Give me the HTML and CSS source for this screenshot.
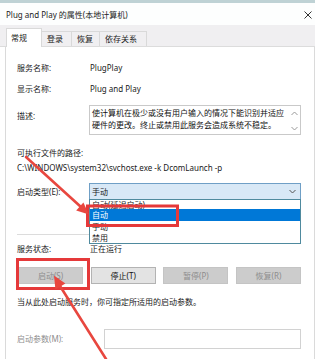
FILE: index.html
```html
<!DOCTYPE html>
<html lang="zh-CN">
<head>
    <meta charset="UTF-8">
    <title>Plug and Play 的属性</title>
    <link rel="stylesheet" href="styles.css">
</head>
<body>

<div class="window">
    <div class="topline"></div>

    <!-- title bar -->
    <div class="titlebar">
        <span class="title">Plug and Play 的属性(本地计算机)</span>
        <svg class="close" width="8" height="8" viewBox="0 0 8 8"><path d="M0.5 0.5 L7.5 7.5 M7.5 0.5 L0.5 7.5" stroke="#333" stroke-width="1"/></svg>
    </div>

    <!-- tabs -->
    <div class="tabs">
        <div class="tab tab-active w36">常规</div>
        <div class="tab w30">登录</div>
        <div class="tab w28">恢复</div>
        <div class="tab w47">依存关系</div>
    </div>

    <div class="panel">
        <div class="row r1">
            <span class="label">服务名称:</span>
            <span class="value">PlugPlay</span>
        </div>
        <div class="row r2">
            <span class="label">显示名称:</span>
            <span class="value">Plug and Play</span>
        </div>
        <div class="row r3">
            <span class="label label-top">描述:</span>
            <div class="desc">
                <div class="desc-text">使计算机在极少或没有用户输入的情况下能识别并适应硬件的更改。终止或禁用此服务会造成系统不稳定。</div>
                <div class="desc-scroll">
                    <svg width="7" height="5" viewBox="0 0 7 5"><path d="M0.5 4 L3.5 1 L6.5 4" fill="none" stroke="#9a9a9a" stroke-width="1"/></svg>
                    <svg width="7" height="5" viewBox="0 0 7 5"><path d="M0.5 1 L3.5 4 L6.5 1" fill="none" stroke="#9a9a9a" stroke-width="1"/></svg>
                </div>
            </div>
        </div>
        <div class="line r4">可执行文件的路径:</div>
        <div class="line r5">C:\WINDOWS\system32\svchost.exe -k DcomLaunch -p</div>
        <div class="row r6">
            <span class="label">启动类型(E):</span>
            <div class="select">
                <span>手动</span>
                <svg width="7" height="5" viewBox="0 0 7 5"><path d="M0.5 1 L3.5 4 L6.5 1" fill="none" stroke="#555" stroke-width="1"/></svg>
                <ul class="options">
                    <li class="opt-first">自动(延迟启动)</li>
                    <li class="opt-on">自动</li>
                    <li>手动</li>
                    <li>禁用</li>
                </ul>
            </div>
        </div>
        <div class="sep"></div>
        <div class="row r7">
            <span class="label">服务状态:</span>
            <span class="value">正在运行</span>
        </div>
        <div class="buttons">
            <div class="btn btn-off">启动(S)</div>
            <div class="btn">停止(T)</div>
            <div class="btn btn-off">暂停(P)</div>
            <div class="btn btn-off">恢复(R)</div>
        </div>
        <div class="line r8">当从此处启动服务时，你可指定所适用的启动参数。</div>
        <div class="row r9">
            <span class="label label-wide label-off">启动参数(M):</span>
            <div class="param"></div>
        </div>
    </div>

    <!-- red annotations -->
    <svg class="marks" width="315" height="359" viewBox="0 0 315 359">
        <g fill="none" stroke="#e5393a" stroke-width="3">
            <rect x="87.5" y="206" width="90" height="19.5"/>
            <rect x="17.5" y="259.5" width="71" height="29"/>
        </g>
        <g stroke="#e8473f" stroke-width="2.6" stroke-linecap="round">
            <line x1="26" y1="157" x2="81" y2="207"/>
            <line x1="106" y1="359" x2="60" y2="286"/>
        </g>
        <g fill="#e8473f">
            <polygon points="89,214.5 76.2,210.6 83.4,202.6"/>
            <polygon points="54,275.5 65.4,283.6 55.4,289.6"/>
        </g>
    </svg>
</div>

</body>
</html>
```

FILE: styles.css
```css
* { box-sizing: border-box; }
body { margin: 0; background: #fff; font-family: "Noto Sans", "Noto Sans CJK SC", sans-serif; font-size: 8px; color: #1a1a1a; }
.window { position: relative; width: 315px; height: 359px; overflow: hidden; background: #fff; }
.topline { height: 3px; background: #bfd2d5; }

.titlebar { height: 22px; display: flex; align-items: center; justify-content: space-between; padding: 0 3px 0 6px; background: #fdfefe; }
.title { font-size: 8px; color: #222; }
.close { margin-top: 1px; }

.tabs { height: 22px; background: #f0eff1; display: flex; align-items: flex-end; padding-left: 6px; border-bottom: 1px solid #dcdcdc; }
.tab { height: 15px; line-height: 14px; padding-left: 5px; border: 1px solid #d9d9d9; border-bottom: none; border-left: none; color: #222; }
.tab-active { height: 19px; line-height: 18px; background: #fff; border-left: 1px solid #d9d9d9; margin-bottom: -1px; padding-left: 4px; }
.w36 { width: 36px; }
.w30 { width: 30px; }
.w28 { width: 28px; }
.w47 { width: 47px; }

.panel { margin-left: 5px; width: 310px; height: 312px; border-left: 1px solid #dadada; border-right: 1px solid #dadada; padding: 15px 13px 0 11px; }

.row { display: flex; align-items: center; height: 12px; line-height: 12px; }
.label { width: 72px; flex: none; }
.label-wide { width: 87px; }
.label-top { align-self: flex-start; padding-top: 5px; }
.label-off { color: #8e8e8e; }
.value { padding-left: 1px; }
.line { height: 12px; line-height: 12px; white-space: nowrap; }

.r2 { margin-top: 9px; }
.r3 { margin-top: 10px; height: 30px; align-items: flex-start; }
.r4 { margin-top: 12px; }
.r5 { margin-top: 3px; }
.r6 { margin-top: 9px; height: 17px; }
.r7 { margin-top: 8px; }
.r8 { margin-top: 12px; }
.r9 { margin-top: 21px; height: 20px; }

.desc { flex: 1; height: 30px; border: 1px solid #c9c9c9; display: flex; }
.desc-text { flex: 1; padding: 1px 2px 0 2px; line-height: 12px; color: #111; }
.desc-scroll { width: 12px; display: flex; flex-direction: column; justify-content: space-between; align-items: center; padding: 5px 0 3px; }

.select { position: relative; flex: 1; height: 17px; background: #d8e8f6; border: 1px solid #6f9fc6; display: flex; align-items: center; justify-content: space-between; padding: 0 4px 0 2px; }
.options { position: absolute; left: -1px; right: -1px; top: 15px; height: 45px; margin: 0; padding: 0; list-style: none; background: #fff; border: 1px solid #4f8a9e; z-index: 2; }
.options li { height: 11px; line-height: 11px; padding-left: 2px; }
.options .opt-first { height: 9px; line-height: 9px; }
.options .opt-on { height: 12px; line-height: 12px; background: #0078d7; color: #fff; }

.sep { margin-top: 34px; height: 1px; background: #dcdcdc; }

.buttons { margin-top: 12px; padding-left: 1px; display: flex; justify-content: space-between; }
.btn { width: 65px; height: 17px; line-height: 15px; text-align: center; background: #e3e3e3; border: 1px solid #b3b3b3; color: #111; }
.btn-off { background: #cccccc; border-color: #c4c4c4; color: #8c8c8c; }

.param { flex: 1; height: 20px; border: 1px solid #d2d2d2; background: #fff; }

.marks { position: absolute; left: 0; top: 0; pointer-events: none; z-index: 5; }
```
